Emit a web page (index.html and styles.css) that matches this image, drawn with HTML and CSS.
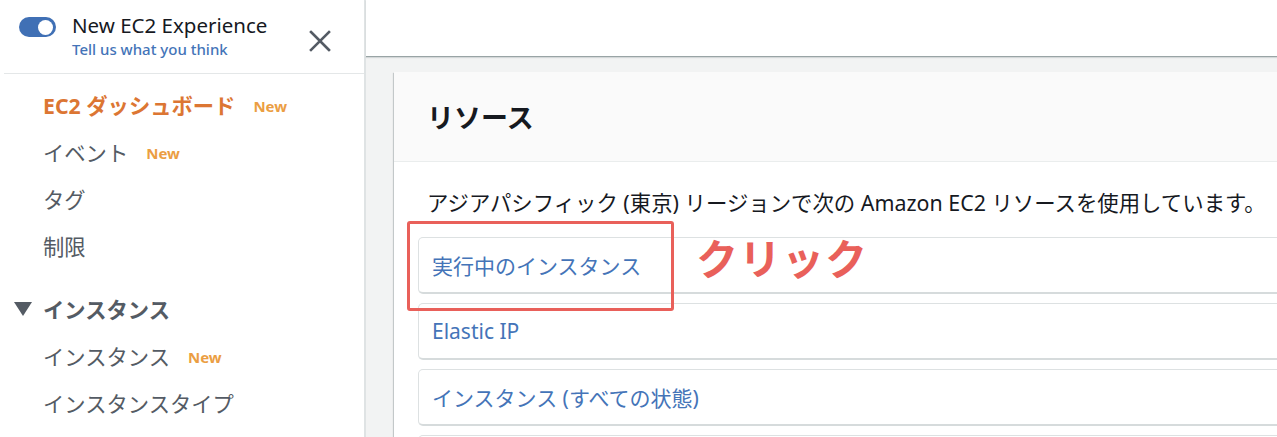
FILE: index.html
```html
<!DOCTYPE html>
<html lang="ja">
<head>
<meta charset="utf-8">
<title>EC2</title>
<link rel="stylesheet" href="styles.css">
</head>
<body>
<div class="app">
  <aside class="sidebar">
    <div class="side-head">
      <span class="toggle"><span class="knob"></span></span>
      <div class="side-title">
        <div class="exp">New EC2 Experience</div>
        <a class="tell" href="#">Tell us what you think</a>
      </div>
      <svg class="close" width="22" height="22" viewBox="0 0 22 22"><path d="M2 2 L20 20 M20 2 L2 20" stroke="#545b64" stroke-width="2.6" stroke-linecap="square" fill="none"/></svg>
    </div>
    <nav class="nav">
      <div class="nav-item active">EC2 ダッシュボード<span class="new">New</span></div>
      <div class="nav-item">イベント<span class="new">New</span></div>
      <div class="nav-item">タグ</div>
      <div class="nav-item">制限</div>
      <div class="nav-section">
        <svg class="caret" width="18" height="14" viewBox="0 0 18 14"><polygon points="0,0 18,0 9,14" fill="#545b64"/></svg>
        インスタンス
      </div>
      <div class="nav-item">インスタンス<span class="new">New</span></div>
      <div class="nav-item">インスタンスタイプ</div>
    </nav>
  </aside>
  <main class="main">
    <div class="topbar"></div>
    <div class="content">
      <section class="card">
        <header class="card-head"><h2>リソース</h2></header>
        <div class="card-body">
          <p class="desc">アジアパシフィック (東京) リージョンで次の Amazon EC2 リソースを使用しています。</p>
          <div class="rows">
            <div class="row annotated">
              <a href="#">実行中のインスタンス</a>
              <span class="hl"></span>
              <span class="click">クリック</span>
            </div>
            <div class="row"><a href="#">Elastic IP</a></div>
            <div class="row"><a href="#">インスタンス (すべての状態)</a></div>
            <div class="row"><a href="#">&nbsp;</a></div>
          </div>
        </div>
      </section>
    </div>
  </main>
</div>
</body>
</html>
```
FILE: styles.css
```css
* { box-sizing: border-box; }
html, body { margin: 0; padding: 0; }
body {
  font-family: "Noto Sans", "Noto Sans CJK JP", sans-serif;
  color: #16191f;
  background: #fff;
}
a { text-decoration: none; color: #4474b8; }

.app {
  display: flex;
  width: 1277px;
  height: 437px;
  overflow: hidden;
}

.sidebar {
  width: 366px;
  flex: none;
  border-right: 2px solid #dfe3e4;
  background: #fff;
}
.side-head {
  display: flex;
  align-items: flex-start;
  height: 74px;
  margin-left: 4px;
  padding: 12px 0 0 15px;
  border-bottom: 1px solid #e4e7e8;
}
.toggle {
  width: 37px;
  height: 20px;
  margin-top: 5px;
  border-radius: 10px;
  background: #4070b5;
  display: flex;
  align-items: center;
  justify-content: flex-end;
  padding-right: 3px;
  flex: none;
}
.knob {
  width: 15px;
  height: 15px;
  border-radius: 50%;
  background: #fff;
}
.side-title {
  margin-left: 16px;
  display: flex;
  flex-direction: column;
}
.exp {
  font-size: 20.5px;
  line-height: 27px;
  color: #16191f;
}
.tell {
  font-size: 15px;
  line-height: 20px;
  font-weight: 500;
}
.close {
  margin-left: auto;
  margin-right: 33px;
  margin-top: 18px;
}

.nav {
  padding-top: 7px;
}
.nav-item, .nav-section {
  display: flex;
  align-items: center;
  height: 47px;
  padding-left: 43px;
  font-size: 21.3px;
  color: #545b64;
}
.nav-item.active {
  color: #dc7633;
  font-weight: 700;
}
.nav-section {
  margin-top: 16px;
  padding-left: 14px;
  font-weight: 700;
}
.caret { margin-right: 11px; }
.new {
  margin-left: 18px;
  font-size: 15px;
  font-weight: 700;
  color: #eb9e43;
  padding-top: 3px;
}

.main {
  flex: 1;
  min-width: 0;
  display: flex;
  flex-direction: column;
  background: #f2f3f3;
}
.topbar {
  height: 57px;
  flex: none;
  background: #fff;
  border-bottom: 1px solid #99a4a5;
  box-shadow: 0 1px 1px rgba(0, 28, 36, 0.12);
}
.content {
  padding: 15px 0 0 28px;
}
.card {
  margin-right: -60px;
  background: #fff;
  box-shadow: 0 1px 1px 0 rgba(0, 28, 36, 0.3), 1px 1px 1px 0 rgba(0, 28, 36, 0.15), -1px 1px 1px 0 rgba(0, 28, 36, 0.15);
}
.card-head {
  height: 90px;
  background: #fafafa;
  border-bottom: 1px solid #eaeded;
  display: flex;
  align-items: center;
  padding-left: 33px;
}
.card-head h2 {
  margin: 0;
  font-size: 27px;
  font-weight: 700;
  color: #16191f;
}
.card-body {
  padding: 0 0 20px 24px;
}
.desc {
  margin: 0;
  padding: 26px 0 0 9px;
  height: 75px;
  font-size: 21.4px;
  line-height: 30px;
  color: #16191f;
}
.rows {
  display: flex;
  flex-direction: column;
  gap: 9px;
  margin-right: 24px;
}
.row {
  height: 57px;
  display: flex;
  align-items: center;
  padding-left: 13px;
  border: 1px solid #dde1e2;
  border-bottom: 2px solid #d6dbdc;
  border-radius: 5px;
  background: #fff;
  font-size: 21px;
}
.annotated { position: relative; }
.hl {
  position: absolute;
  left: -12px;
  top: -17px;
  width: 267px;
  height: 90px;
  border: 3px solid #e9605a;
  border-radius: 3px;
}
.click {
  position: absolute;
  left: 277px;
  top: -9px;
  font-size: 42px;
  line-height: 60px;
  font-weight: 700;
  color: #e9605a;
  letter-spacing: 1px;
}
```
